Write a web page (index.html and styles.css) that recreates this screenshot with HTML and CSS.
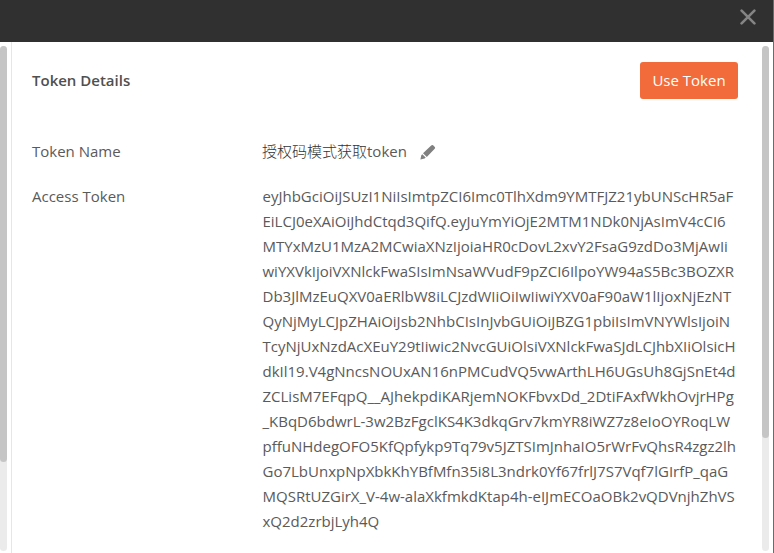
FILE: index.html
```html
<!DOCTYPE html>
<html lang="zh-CN">
<head>
<meta charset="utf-8">
<title>Token Details</title>
<link rel="stylesheet" href="styles.css">
</head>
<body>
<div class="modal">
  <header class="topbar">
    <svg class="close" viewBox="0 0 16 16"><path d="M1.6 1.6 14.4 14.4M14.4 1.6 1.6 14.4"/></svg>
  </header>
  <main class="body">
    <div class="track track-left"><div class="thumb"></div></div>
    <section class="details">
      <div class="heading">
        <h1>Token Details</h1>
        <button class="use">Use Token</button>
      </div>
      <div class="row name-row">
        <div class="label">Token Name</div>
        <div class="value"><span class="name">授权码模式获取</span>token<svg class="edit" viewBox="0 0 16 16"><path d="M3 9.2 11.2 1.4Q12.2.5 13.1 1.3L14.8 2.9Q15.6 3.8 14.7 4.8L6.8 12.9ZM2.3 10.2 5.7 13.6 4.6 14.6.4 15.6 1.3 11.3Z"/></svg></div>
      </div>
      <div class="row">
        <div class="label">Access Token</div>
        <div class="value token">eyJhbGciOiJSUzI1NiIsImtpZCI6Imc0TlhXdm9YMTFJZ21ybUNScHR5aF<br>EiLCJ0eXAiOiJhdCtqd3QifQ.eyJuYmYiOjE2MTM1NDk0NjAsImV4cCI6<br>MTYxMzU1MzA2MCwiaXNzIjoiaHR0cDovL2xvY2FsaG9zdDo3MjAwIi<br>wiYXVkIjoiVXNlckFwaSIsImNsaWVudF9pZCI6IlpoYW94aS5Bc3BOZXR<br>Db3JlMzEuQXV0aERlbW8iLCJzdWIiOiIwIiwiYXV0aF90aW1lIjoxNjEzNT<br>QyNjMyLCJpZHAiOiJsb2NhbCIsInJvbGUiOiJBZG1pbiIsImVNYWlsIjoiN<br>TcyNjUxNzdAcXEuY29tIiwic2NvcGUiOlsiVXNlckFwaSJdLCJhbXIiOlsicH<br>dkIl19.V4gNncsNOUxAN16nPMCudVQ5vwArthLH6UGsUh8GjSnEt4d<br>ZCLisM7EFqpQ__AJhekpdiKARjemNOKFbvxDd_2DtiFAxfWkhOvjrHPg<br>_KBqD6bdwrL-3w2BzFgclKS4K3dkqGrv7kmYR8iWZ7z8eIoOYRoqLW<br>pffuNHdegOFO5KfQpfykp9Tq79v5JZTSImJnhaIO5rWrFvQhsR4zgz2lh<br>Go7LbUnxpNpXbkKhYBfMfn35i8L3ndrk0Yf67frlJ7S7Vqf7lGIrfP_qaG<br>MQSRtUZGirX_V-4w-alaXkfmkdKtap4h-eIJmECOaOBk2vQDVnjhZhVS<br>xQ2d2zrbjLyh4Q</div>
      </div>
    </section>
    <div class="track track-right"><div class="thumb"></div></div>
  </main>
</div>
</body>
</html>
```
FILE: styles.css
```css
* { box-sizing: border-box; }
body {
  margin: 0;
  background: #fff;
  color: #5a5a5a;
  font: 15px/25px "Open Sans", "Noto Sans CJK SC", sans-serif;
}
.modal {
  display: flex;
  flex-direction: column;
  width: 774px;
  height: 553px;
  overflow: hidden;
  border-right: 1px solid #6b6b6b;
}
.topbar {
  display: flex;
  flex: 0 0 42px;
  justify-content: flex-end;
  padding: 9px 17px 0 0;
  background: #303030;
}
.close {
  width: 16px;
  height: 16px;
  fill: none;
  stroke: #858585;
  stroke-width: 2.6;
  stroke-linecap: round;
}
.body { display: flex; flex: 1; min-height: 0; }
.track {
  flex: 0 0 7px;
  height: 505px;
  margin-top: 4px;
  border-radius: 4px;
  background: #ebebeb;
}
.thumb { height: 416px; border-radius: 4px; background: #c5c5c5; }
.track-left { margin-right: 4px; }
.track-right { margin-right: 4px; }
.track-right .thumb { height: 392px; }
.details {
  flex: 1;
  min-width: 0;
  padding: 20px 24px 0 20px;
  border-left: 1px solid #e6e6e6;
}
.heading {
  display: flex;
  align-items: center;
  justify-content: space-between;
  height: 37px;
  margin-bottom: 40px;
}
h1 { margin: 0; color: #505050; font-size: 15px; font-weight: 600; }
.use {
  width: 98px;
  height: 37px;
  padding: 0;
  border: 0;
  border-radius: 3px;
  background: #f26b3a;
  color: #fff;
  font: 15px/37px "Open Sans", sans-serif;
}
.row { display: flex; }
.name-row { height: 45px; }
.label { flex: 0 0 230px; }
.value { white-space: nowrap; }
.token { padding-left: 0.5px; }
.name-row .value { display: flex; height: 25px; }
.name { color: #333; font-weight: 300; }
.edit { width: 16px; height: 16px; margin: 5px 0 0 13px; fill: #808080; }
```
